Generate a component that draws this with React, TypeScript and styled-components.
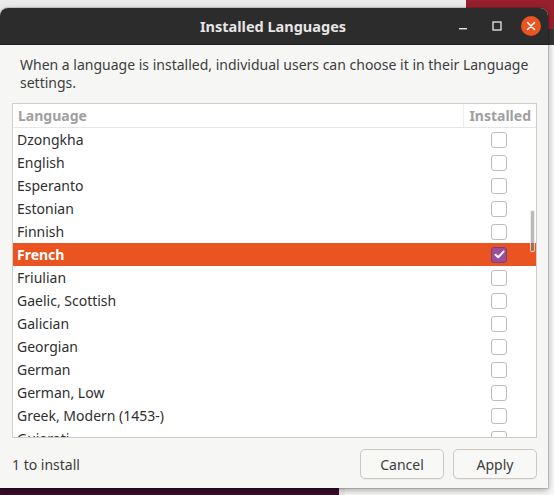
import React from "react";
import styled, { createGlobalStyle } from "styled-components";

const GlobalStyle = createGlobalStyle`
    html, body {
        margin: 0;
        padding: 0;
        overflow: hidden;
    }
    body {
        font-family: "Noto Sans", "Open Sans", sans-serif;
    }
`;

const Desktop = styled.div`
    position: relative;
    width: 554px;
    height: 495px;
    overflow: hidden;
    background: #380c2a;
`;

// windows lying behind the dialog
const BackWindow = styled.div`
    position: absolute;
    left: 0;
    top: 0;
    width: 466px;
    height: 20px;
    background: #ebebeb;
    border-bottom: 1px solid #d8d8d8;
`;

const RedWindow = styled.div`
    position: absolute;
    left: 466px;
    top: 0;
    width: 100px;
    height: 40px;
    background: #96202d;
`;

const SettingsWindow = styled.div`
    position: absolute;
    left: 339px;
    top: 29px;
    width: 240px;
    height: 480px;
    background: #f6f6f6;
    display: flex;
    flex-direction: column;
`;

const SettingsHeader = styled.div`
    height: 16px;
    background: #333333;
`;

const SettingsSidebar = styled.div`
    flex: 1;
    border-left: 6px solid #ececec;
    border-right: 1px solid #d6d6d6;
    margin-right: 3px;
    position: relative;
`;

const SidebarItem = styled.div`
    position: absolute;
    left: 11px;
    top: 451px;
    display: flex;
    align-items: center;
    gap: 16px;
    font-size: 14px;
    color: #3c3c3c;
    white-space: nowrap;
`;

const MouseIcon = styled.span`
    width: 8px;
    height: 10px;
    border: 1.5px solid #555;
    border-radius: 2px;
`;

const Dialog = styled.div`
    position: absolute;
    left: 0;
    top: 8px;
    width: 548px;
    height: 480px;
    display: flex;
    flex-direction: column;
    background: #f6f6f5;
    border-radius: 8px 8px 0 0;
    box-shadow: 0 2px 6px rgba(0, 0, 0, 0.35), 0 0 0 1px rgba(0, 0, 0, 0.12);
    overflow: hidden;
`;

const TitleBar = styled.div`
    position: relative;
    height: 36px;
    flex-shrink: 0;
    background: #2c2c2c;
    display: flex;
    align-items: center;
    justify-content: center;
    border-bottom: 1px solid #1f1f1f;
`;

const Title = styled.div`
    font-size: 14.5px;
    font-weight: 700;
    color: #e6e6e6;
    margin-left: -2px;
`;

const Controls = styled.div`
    position: absolute;
    right: 7px;
    top: 8px;
    display: flex;
    align-items: center;
    gap: 14px;
`;

const ControlButton = styled.div`
    width: 20px;
    height: 20px;
    display: flex;
    align-items: center;
    justify-content: center;
`;

const CloseButton = styled(ControlButton)`
    border-radius: 50%;
    background: #e95420;
`;

const Body = styled.div`
    flex: 1;
    display: flex;
    flex-direction: column;
    padding: 11px 11px 0 12px;
    min-height: 0;
`;

const Description = styled.p`
    margin: 0 0 11px 8px;
    font-size: 14px;
    line-height: 18px;
    color: #3d3d3d;
`;

const ListBox = styled.div`
    position: relative;
    height: 333px;
    background: #ffffff;
    border: 1px solid #cdcdcd;
    display: flex;
    flex-direction: column;
    overflow: hidden;
`;

const HeaderRow = styled.div`
    display: flex;
    height: 23px;
    flex-shrink: 0;
    border-bottom: 1px solid #e6e6e6;
    font-size: 14px;
    font-weight: 700;
    color: #a0a0a0;
`;

const HeaderCell = styled.div<{ $grow?: boolean }>`
    display: flex;
    align-items: center;
    padding: 0 5px 1px;
    flex: ${(p) => (p.$grow ? 1 : "none")};
    border-left: ${(p) => (p.$grow ? "none" : "1px solid #ececec")};
`;

const Rows = styled.div`
    flex: 1;
    overflow: hidden;
`;

const Row = styled.div<{ $selected?: boolean }>`
    display: flex;
    align-items: center;
    justify-content: space-between;
    height: 23px;
    padding: 0 29px 0 4px;
    font-size: 14px;
    background: ${(p) => (p.$selected ? "#e95420" : "transparent")};
    color: ${(p) => (p.$selected ? "#ffffff" : "#2f2f2f")};
    font-weight: ${(p) => (p.$selected ? 700 : 400)};
`;

const Check = styled.span<{ $checked?: boolean }>`
    width: 14px;
    height: 14px;
    border-radius: 3px;
    border: 1px solid ${(p) => (p.$checked ? "#7d3e78" : "#bdbdbd")};
    background: ${(p) => (p.$checked ? "#9c4f97" : "#ffffff")};
    display: flex;
    align-items: center;
    justify-content: center;
`;

const ScrollThumb = styled.div`
    position: absolute;
    right: 1px;
    top: 106px;
    width: 3px;
    height: 40px;
    border-radius: 2px;
    background: rgba(120, 120, 120, 0.5);
    border: 1px solid rgba(255, 255, 255, 0.7);
`;

const Footer = styled.div`
    display: flex;
    align-items: center;
    padding: 11px 0 9px 0;
    gap: 9px;
`;

const Status = styled.div`
    flex: 1;
    font-size: 14px;
    color: #3d3d3d;
`;

const Button = styled.button`
    width: 84px;
    height: 30px;
    font-family: inherit;
    font-size: 14px;
    color: #3d3d3d;
    background: #f8f8f7;
    border: 1px solid #cdc7c2;
    border-radius: 5px;
    box-shadow: 0 1px rgba(0, 0, 0, 0.04);
    padding: 0;
`;

const languages = [
    "Dzongkha",
    "English",
    "Esperanto",
    "Estonian",
    "Finnish",
    "French",
    "Friulian",
    "Gaelic, Scottish",
    "Galician",
    "Georgian",
    "German",
    "German, Low",
    "Greek, Modern (1453-)",
    "Gujarati",
];

function App() {
    return (
        <>
            <GlobalStyle />
            <Desktop>
                <BackWindow />
                <RedWindow />
                <SettingsWindow>
                    <SettingsHeader />
                    <SettingsSidebar>
                        <SidebarItem>
                            <MouseIcon />
                            Mouse &amp; Touchpad
                        </SidebarItem>
                    </SettingsSidebar>
                </SettingsWindow>
                <Dialog>
                    <TitleBar>
                        <Title>Installed Languages</Title>
                        <Controls>
                            <ControlButton>
                                <svg width="10" height="10" viewBox="0 0 10 10">
                                    <rect x="1" y="7" width="8" height="1.4" fill="#e6e6e6" />
                                </svg>
                            </ControlButton>
                            <ControlButton>
                                <svg width="10" height="10" viewBox="0 0 10 10">
                                    <rect x="1" y="1" width="8" height="8" fill="none" stroke="#e6e6e6" strokeWidth="1.3" />
                                </svg>
                            </ControlButton>
                            <CloseButton>
                                <svg width="10" height="10" viewBox="0 0 10 10">
                                    <path d="M1.5 1.5 L8.5 8.5 M8.5 1.5 L1.5 8.5" stroke="#ffffff" strokeWidth="1.5" strokeLinecap="round" />
                                </svg>
                            </CloseButton>
                        </Controls>
                    </TitleBar>
                    <Body>
                        <Description>
                            When a language is installed, individual users can choose it in their Language settings.
                        </Description>
                        <ListBox>
                            <HeaderRow>
                                <HeaderCell $grow>Language</HeaderCell>
                                <HeaderCell>Installed</HeaderCell>
                            </HeaderRow>
                            <Rows>
                                {languages.map((name) => {
                                    const selected = name === "French";
                                    return (
                                        <Row key={name} $selected={selected}>
                                            <span>{name}</span>
                                            <Check $checked={selected}>
                                                {selected && (
                                                    <svg width="11" height="9" viewBox="0 0 11 9">
                                                        <path d="M1.5 4.8 L4.2 7.3 L9.5 1.6" fill="none" stroke="#ffffff" strokeWidth="2" strokeLinecap="round" strokeLinejoin="round" />
                                                    </svg>
                                                )}
                                            </Check>
                                        </Row>
                                    );
                                })}
                            </Rows>
                            <ScrollThumb />
                        </ListBox>
                        <Footer>
                            <Status>1 to install</Status>
                            <Button>Cancel</Button>
                            <Button>Apply</Button>
                        </Footer>
                    </Body>
                </Dialog>
            </Desktop>
        </>
    );
}

export default App;
